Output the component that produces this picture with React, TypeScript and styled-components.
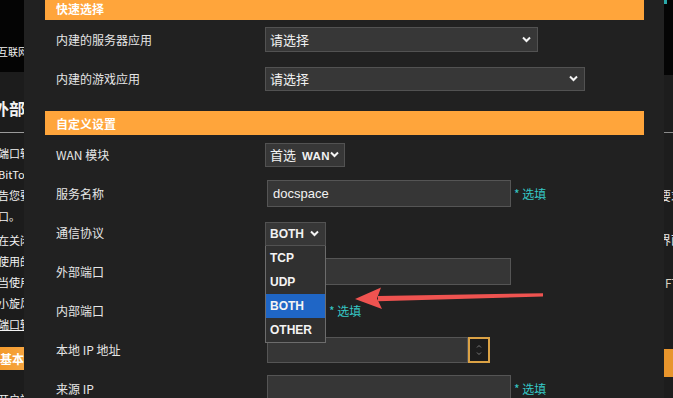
import React from 'react';
import styled, { createGlobalStyle } from 'styled-components';

const GlobalStyle = createGlobalStyle`
  html, body {
    margin: 0;
    padding: 0;
    background: #000;
  }
  body {
    font-family: 'Noto Sans CJK SC', 'Noto Sans', sans-serif;
  }
`;

const CJK = `'Noto Sans CJK SC', 'Noto Sans', sans-serif`;
const LATIN = `'Liberation Sans', 'Noto Sans CJK SC', sans-serif`;

export default function App() {
  return (
    <Screen>
      <GlobalStyle />
      <UnderLeft>
        <TopBand>
          <ShiftedText>国际互联网</ShiftedText>
        </TopBand>
        <PageTitle>外部网络</PageTitle>
        <Rule />
        <Para>
          <Line>端口转发功能</Line>
          <Line>BitTorrent</Line>
          <Line>告您要开启的</Line>
          <Line>口。</Line>
          <Line $gap={3}>在关闭防火墙</Line>
          <Line>使用的端口</Line>
          <Line>当使用者</Line>
          <Line>小旋风</Line>
          <Line $link>端口转发</Line>
        </Para>
        <BasicBar>基本设置</BasicBar>
        <Line $gap={19}>开启端口转发</Line>
      </UnderLeft>

      <Modal>
        <Scroller>
          <SectionHead>快速选择</SectionHead>
          <Row>
            <Label>内建的服务器应用</Label>
            <FakeSelect $w={273} $h={25}>
              <span>请选择</span>
              <Chevron />
            </FakeSelect>
          </Row>
          <Row>
            <Label>内建的游戏应用</Label>
            <FakeSelect $w={320} $h={24}>
              <span>请选择</span>
              <Chevron />
            </FakeSelect>
          </Row>
          <SectionGap />
          <SectionHead>自定义设置</SectionHead>
          <Row>
            <Label>WAN 模块</Label>
            <FakeSelect $w={80} $h={24} $tight>
              <span>
                首选 <Mono>WAN</Mono>
              </span>
              <Chevron />
            </FakeSelect>
          </Row>
          <Row>
            <Label>服务名称</Label>
            <TextInput $w={244} defaultValue="docspace" />
            <Hint>* 选填</Hint>
          </Row>
          <Row $raise>
            <Label>通信协议</Label>
            <SelectWrap>
              <FakeSelect $w={61} $h={24} $bold>
                <span>BOTH</span>
                <Chevron />
              </FakeSelect>
              <Menu>
                <Option>TCP</Option>
                <Option>UDP</Option>
                <Option $active>BOTH</Option>
                <Option>OTHER</Option>
              </Menu>
            </SelectWrap>
          </Row>
          <Row>
            <Label>外部端口</Label>
            <TextInput $w={244} />
          </Row>
          <Row>
            <Label>内部端口</Label>
            <TextInput $w={59} />
            <Hint>* 选填</Hint>
          </Row>
          <Row>
            <Label>本地 IP 地址</Label>
            <TextInput $w={201} $h={26} />
            <Spinner>
              <svg width="8" height="14" viewBox="0 0 8 14">
                <path d="M2 4.5 L4 2.5 L6 4.5" fill="none" stroke="#777" strokeWidth="1" />
                <path d="M2 9.5 L4 11.5 L6 9.5" fill="none" stroke="#777" strokeWidth="1" />
              </svg>
            </Spinner>
          </Row>
          <Row>
            <Label>来源 IP</Label>
            <TextInput $w={244} />
            <Hint>* 选填</Hint>
          </Row>
        </Scroller>
      </Modal>

      <UnderRight>
        <TopBandRight>
          <TealDot />
        </TopBandRight>
        <RuleRight />
        <RightText $top={13}>(</RightText>
        <RightText $top={23}>要求</RightText>
        <RightText $top={26}>界面</RightText>
        <RightText $top={25} $dim>FTP</RightText>
        <RightBar />
      </UnderRight>

      <Arrow viewBox="350 283 200 30" width="200" height="30">
        <polygon points="378,296 543,293.2 543,296.6 378,301.2" fill="#ef5350" />
        <polygon points="355,299 381,287.5 377,298.5 382,309" fill="#ef5350" />
      </Arrow>
    </Screen>
  );
}

function Chevron() {
  return (
    <svg width="9" height="7" viewBox="0 0 9 7">
      <path d="M1 1.5 L4.5 5 L8 1.5" fill="none" stroke="#f4f4f4" strokeWidth="2" />
    </svg>
  );
}

const Screen = styled.div`
  position: relative;
  display: flex;
  width: 673px;
  height: 398px;
  overflow: hidden;
  background: #000;
`;

/* ---------- page behind the dialog, left side ---------- */

const UnderLeft = styled.div`
  width: 24px;
  flex-shrink: 0;
  overflow: hidden;
  background: #1c1c1c;
  color: #f2f2f2;
  font-family: ${CJK};
  font-size: 11px;
  white-space: nowrap;
`;

const TopBand = styled.div`
  height: 72px;
  background: #040404;
  display: flex;
  align-items: flex-end;
  padding-bottom: 12px;
  box-sizing: border-box;
`;

const ShiftedText = styled.div`
  line-height: 16px;
  font-size: 10px;
  margin-left: -22px;
`;

const PageTitle = styled.div`
  margin: 26px 0 0 -7px;
  font-size: 16px;
  font-weight: bold;
  line-height: 20px;
`;

const Rule = styled.div`
  margin-top: 14px;
  height: 1px;
  background: #9a9a9a;
`;

const Para = styled.div`
  margin-top: 10px;
`;

const Line = styled.div<{ $gap?: number; $link?: boolean }>`
  line-height: 21px;
  margin-left: -2px;
  margin-top: ${(p) => p.$gap ?? 0}px;
  text-decoration: ${(p) => (p.$link ? 'underline' : 'none')};
`;

const BasicBar = styled.div`
  margin-top: 12px;
  height: 23px;
  line-height: 23px;
  background: linear-gradient(90deg, #f39a2c, #f6a540);
  font-size: 12px;
  font-weight: bold;
  color: #fff;
`;

/* ---------- page behind the dialog, right side ---------- */

const UnderRight = styled.div`
  width: 9px;
  flex-shrink: 0;
  overflow: hidden;
  background: #1d1d1d;
  color: #e8e8e8;
  font-family: ${CJK};
  font-size: 12px;
  white-space: nowrap;
`;

const TopBandRight = styled.div`
  height: 75px;
  background: #050505;
`;

const TealDot = styled.div`
  width: 3px;
  height: 4px;
  background: #2aa7a7;
`;

const RuleRight = styled.div`
  margin-top: 57px;
  height: 1px;
  background: #8a8a8a;
`;

const RightText = styled.div<{ $top: number; $dim?: boolean }>`
  margin-top: ${(p) => p.$top}px;
  line-height: 18px;
  margin-left: ${(p) => (p.$dim ? '1px' : '-5px')};
  color: ${(p) => (p.$dim ? '#d8d0c0' : '#e8e8e8')};
`;

const RightBar = styled.div`
  margin-top: 57px;
  height: 28px;
  background: #e8952c;
`;

/* ---------- dialog ---------- */

const Modal = styled.div`
  width: 640px;
  flex-shrink: 0;
  background: #212121;
  padding: 0 20px 0 21px;
  box-sizing: border-box;
  overflow: hidden;
`;

const Scroller = styled.div`
  margin-top: -4px;
`;

const SectionHead = styled.div`
  height: 24px;
  display: flex;
  align-items: center;
  padding-left: 11px;
  background: #ffa53b;
  color: #fff;
  font-family: ${CJK};
  font-size: 12px;
  font-weight: bold;
`;

const SectionGap = styled.div`
  height: 13px;
`;

const Row = styled.div<{ $raise?: boolean }>`
  position: relative;
  z-index: ${(p) => (p.$raise ? 2 : 1)};
  display: flex;
  align-items: center;
  height: 39px;
`;

const Label = styled.div`
  width: 220px;
  flex-shrink: 0;
  padding-left: 11px;
  box-sizing: border-box;
  color: #e6e6e6;
  font-family: ${CJK};
  font-size: 12px;
`;

const FakeSelect = styled.div<{ $w: number; $h: number; $bold?: boolean; $tight?: boolean }>`
  display: flex;
  align-items: center;
  justify-content: space-between;
  width: ${(p) => p.$w}px;
  height: ${(p) => p.$h}px;
  box-sizing: border-box;
  padding: ${(p) => (p.$tight ? '0 5px 0 4px' : '0 6px 0 4px')};
  background: #373737;
  border: 1px solid #525252;
  color: #f2f2f2;
  font-family: ${(p) => (p.$bold ? LATIN : CJK)};
  font-size: ${(p) => (p.$bold ? '12px' : '13px')};
  font-weight: ${(p) => (p.$bold ? 'bold' : 'normal')};
`;

const Mono = styled.span`
  font-family: ${LATIN};
  font-size: 11.5px;
  font-weight: bold;
  letter-spacing: 0.4px;
  margin-left: 3px;
`;

const SelectWrap = styled.div`
  position: relative;
  top: 1px;
`;

const Menu = styled.div`
  position: absolute;
  top: 100%;
  left: 0;
  width: 61px;
  box-sizing: border-box;
  background: #303030;
  border: 1px solid #6c6c6c;
  border-top: none;
`;

const Option = styled.div<{ $active?: boolean }>`
  height: 24px;
  display: flex;
  align-items: center;
  padding-left: 4px;
  background: ${(p) => (p.$active ? '#1f66c6' : 'transparent')};
  color: #f4f4f4;
  font-family: ${LATIN};
  font-size: 12px;
  font-weight: bold;
`;

const TextInput = styled.input<{ $w: number; $h?: number }>`
  margin: 0 0 0 2px;
  width: ${(p) => p.$w}px;
  height: ${(p) => p.$h ?? 27}px;
  box-sizing: border-box;
  padding: 0 5px;
  background: #363636;
  border: 1px solid #555;
  border-radius: 0;
  outline: none;
  color: #f2f2f2;
  font-family: ${LATIN};
  font-size: 13px;
`;

const Hint = styled.span`
  margin-left: 3px;
  color: #36c8c6;
  font-family: ${CJK};
  font-size: 12px;
`;

const Spinner = styled.div`
  width: 22px;
  height: 26px;
  box-sizing: border-box;
  border: 2px solid #dba245;
  background: #1c1c1c;
  display: flex;
  align-items: center;
  justify-content: center;
`;

const Arrow = styled.svg`
  position: absolute;
  left: 350px;
  top: 283px;
  z-index: 5;
`;
